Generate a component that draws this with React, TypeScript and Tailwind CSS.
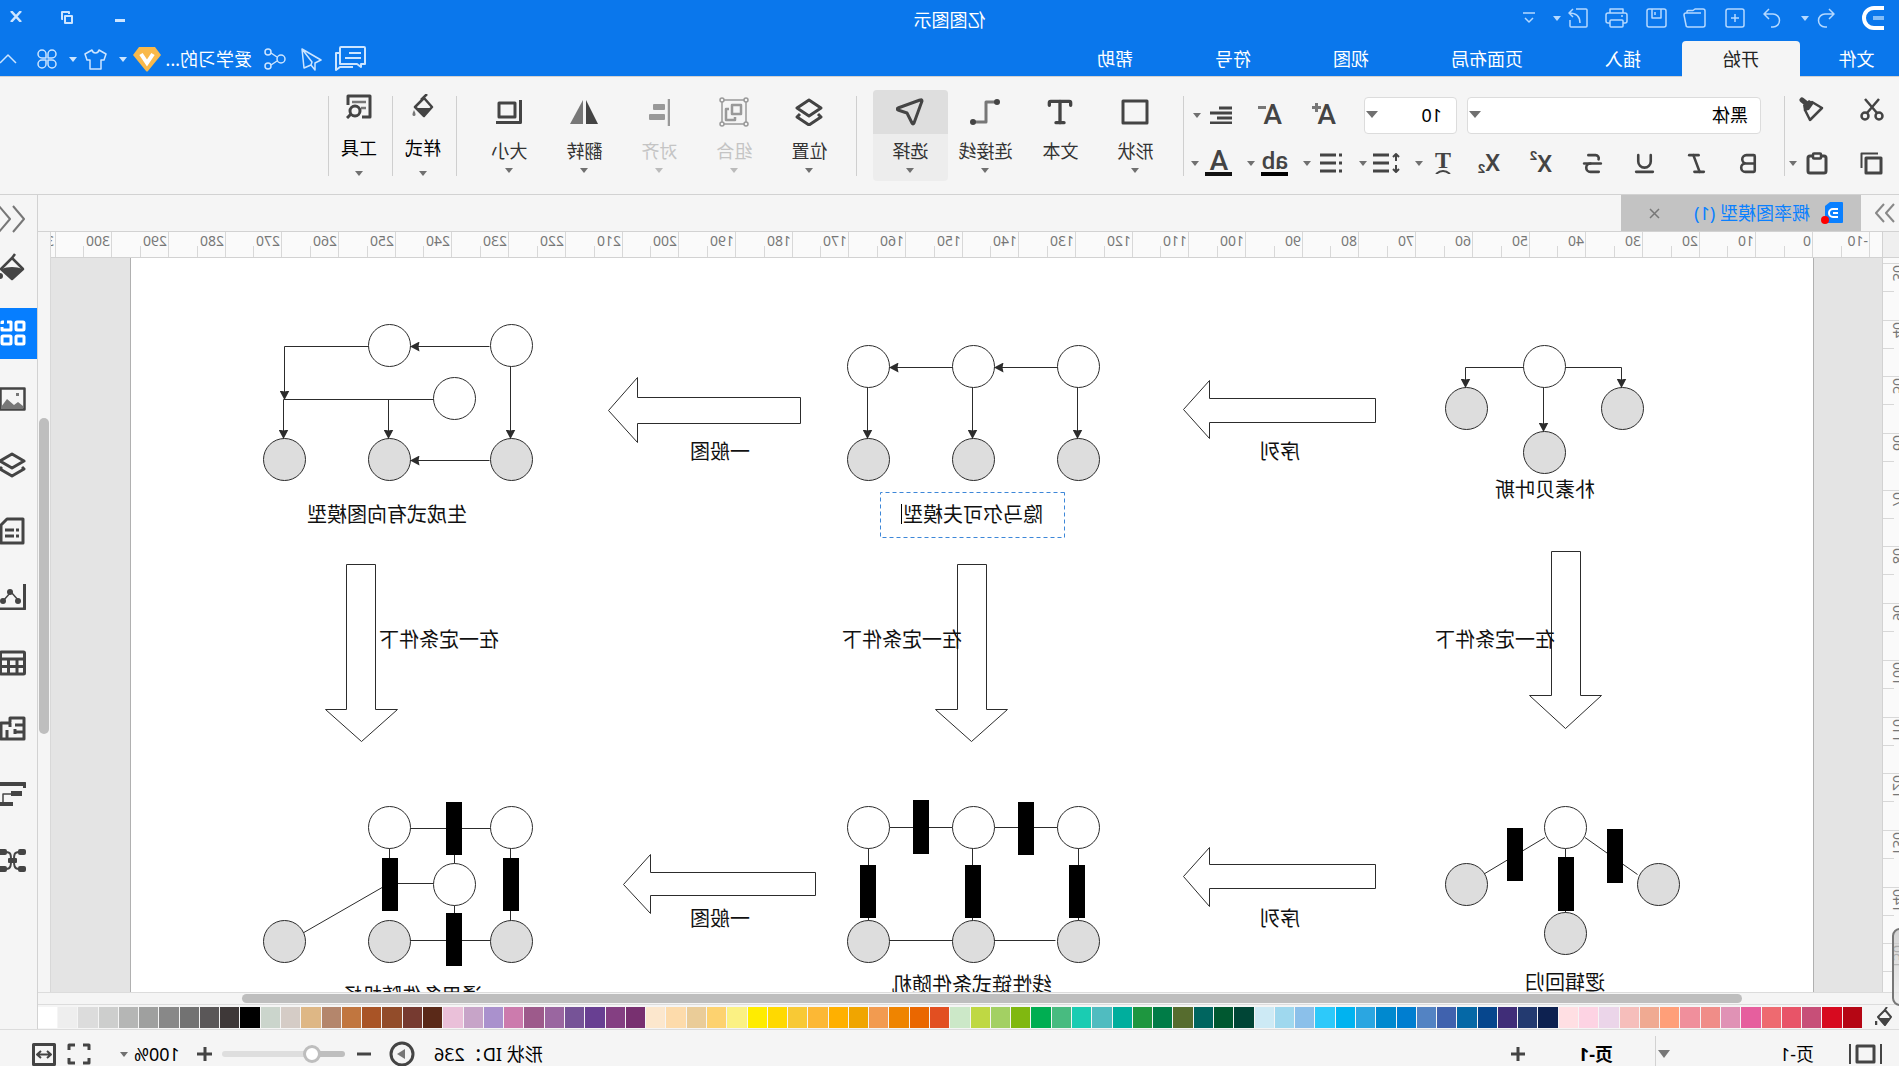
import React from 'react';
import { Bold, Italic, Underline, Strikethrough, Type } from 'lucide-react';

type IconProps = {
  w: number;
  h: number;
  sw?: number;
  className?: string;
  children: React.ReactNode;
};

function Svg({ w, h, sw = 2, className = '', children }: IconProps) {
  return (
    <svg
      width={w}
      height={h}
      viewBox={`0 0 ${w} ${h}`}
      fill="none"
      stroke="currentColor"
      strokeWidth={sw}
      strokeLinejoin="round"
      className={`shrink-0 ${className}`}
      aria-hidden="true"
    >
      {children}
    </svg>
  );
}

function Caret({ className = 'text-[#707070]' }: { className?: string }) {
  return (
    <svg width="8" height="5" viewBox="0 0 8 5" className={`shrink-0 ${className}`} aria-hidden="true">
      <path d="M0 0h8L4 5z" fill="currentColor" />
    </svg>
  );
}

function Divider() {
  return <div className="w-px h-20 mt-[19px] bg-[#cfcfcf] shrink-0" />;
}

const menus = ['插入', '页面布局', '视图', '符号', '帮助'];

const swatches = [
  '#b50614', '#d70a1f', '#c74f78', '#e85468', '#ee6a70', '#e65f9e', '#e092b5', '#f08d88', '#f08f9c', '#ff9f79',
  '#f0aa92', '#f6bebb', '#ebd5e9', '#fdd3e3', '#ffdfe3', '#0d2150', '#233a70', '#402d78', '#06468d', '#0568a6',
  '#4062ae', '#5383c3', '#007ed0', '#0089cf', '#2ba6e1', '#00b3f0', '#2dc9fa', '#8bc0ea', '#9fd8ee', '#cdeaf5',
  '#004536', '#005830', '#00655f', '#566c2e', '#007c47', '#1e963f', '#00ae9d', '#50bcc0', '#1accb2', '#48bb80',
  '#00ae52', '#80b810', '#a3d063', '#bfd843', '#cce8c8', '#e24f21', '#ea6700', '#ef8400', '#f29b50', '#f0a500',
  '#ffb000', '#fcb835', '#f8c935', '#ffd900', '#ffec00', '#fbf183', '#fdd26f', '#eacc98', '#fddbab', '#fce7cd',
  '#783070', '#843f82', '#683f92', '#765397', '#9a66a0', '#9d5a8b', '#cc7bad', '#aa91cd', '#c7a4c8', '#eac0d9',
  '#5a2918', '#763a30', '#924c2a', '#a95426', '#c1763f', '#b4866c', '#deb785', '#d5ccc6', '#cbd5cc', '#000000',
  '#3e3838', '#5a5758', '#727272', '#888888', '#9fa09f', '#b5b6b5', '#cdcecd', '#dcdcdc', '#eeeeee', '#ffffff',
];

/* ---------- header ---------- */

function QuickAccess() {
  return (
    <div className="flex items-center h-9 pl-[15px] text-[#b5d9ff]">
      <svg width="22" height="24" viewBox="0 0 22 24" fill="none" className="shrink-0" aria-hidden="true">
        <path d="M0 2h10a10 10 0 0 1 0 20H0" stroke="#fff" strokeWidth="4" />
        <path d="M0 12h11" stroke="#83bdf8" strokeWidth="4" />
      </svg>
      <button aria-label="撤销" className="ml-[27px]">
        <Svg w={18} h={20} sw={1.5}><path d="M6 1L1 6l5 5M1 6h9a6.5 6.5 0 0 1 0 13H8" /></Svg>
      </button>
      <button aria-label="撤销列表" className="ml-2 w-[9px]"><Caret className="text-[#b5d9ff]" /></button>
      <button aria-label="重做" className="ml-[19px]">
        <Svg w={18} h={20} sw={1.5}><path d="M12 1l5 5-5 5M17 6H8a6.5 6.5 0 0 0 0 13h2" /></Svg>
      </button>
      <button aria-label="新建" className="ml-[18px]">
        <Svg w={20} h={20} sw={1.5}><rect x="1" y="1" width="18" height="18" rx="2" /><path d="M10 6v8M6 10h8" /></Svg>
      </button>
      <button aria-label="打开" className="ml-[19px]">
        <Svg w={23} h={20} sw={1.5}>
          <path d="M5 5h15a2 2 0 0 1 2 2l-2 10a2 2 0 0 1-2 2H3a2 2 0 0 1-2-2V3a2 2 0 0 1 2-2h8l2 1.5h5a1 1 0 0 1 1 1V5" />
        </Svg>
      </button>
      <button aria-label="保存" className="ml-4">
        <Svg w={21} h={20} sw={1.5}><rect x="1" y="1" width="19" height="18" rx="2" /><path d="M6 1v9h9V1M12 4v3" /></Svg>
      </button>
      <button aria-label="打印" className="ml-[18px]">
        <Svg w={23} h={20} sw={1.5}>
          <path d="M5 5V1h13v4M5 15H3a2 2 0 0 1-2-2V7a2 2 0 0 1 2-2h17a2 2 0 0 1 2 2v6a2 2 0 0 1-2 2h-2" />
          <rect x="5" y="12" width="13" height="7" rx="1" /><path d="M5 8h2" />
        </Svg>
      </button>
      <button aria-label="导出" className="ml-[17px]">
        <Svg w={20} h={20} sw={1.5}>
          <path d="M12 1H2a1 1 0 0 0-1 1v16a1 1 0 0 0 1 1h15a1 1 0 0 0 1-1v-6M8 15c0-6 3-10 11-10M15 1l4 4-4 4" />
        </Svg>
      </button>
      <button aria-label="导出选项" className="ml-[7px]"><Caret className="text-[#b5d9ff]" /></button>
      <button aria-label="自定义" className="ml-[18px]">
        <Svg w={12} h={12} sw={1.5}><path d="M0 1h12M2 6l4 4 4-4" /></Svg>
      </button>
    </div>
  );
}

function AccountTools() {
  return (
    <div className="flex items-center h-9 mb-px text-[#cde5ff]">
      <button aria-label="消息">
        <Svg w={31} h={26} sw={2}>
          <path d="M2 1h23a1 1 0 0 1 1 1v16H9l-4 3v-3H1V2a1 1 0 0 1 1-1zM5 7h12M5 12h16M27 7h3v17l-4-3H13" />
        </Svg>
      </button>
      <button aria-label="发送" className="ml-[13px]">
        <Svg w={21} h={23} sw={1.5}><path d="M20 1L1 12l6 3v7l4-5M20 1L10 14l1 3 7 3z" /></Svg>
      </button>
      <button aria-label="分享" className="ml-[15px]">
        <Svg w={22} h={22} sw={1.5}>
          <circle cx="18" cy="4" r="3" /><circle cx="5" cy="11" r="4" /><circle cx="18" cy="18" r="3" />
          <path d="M9 9l6-4M9 13l6 4" />
        </Svg>
      </button>
      <a href="#account" className="ml-3 w-[88px] text-lg text-white whitespace-nowrap">爱学习的...</a>
      <svg width="28" height="25" viewBox="0 0 28 25" className="ml-[3px] shrink-0" aria-hidden="true">
        <path d="M6 0h16l6 8-13 16q-1 1-2 0L0 8z" fill="#f9b94b" />
        <path d="M8 7l6 9 6-9" stroke="#fff" strokeWidth="4" fill="none" />
      </svg>
      <button aria-label="会员" className="ml-[6px]"><Caret className="text-[#cde5ff]" /></button>
      <button aria-label="主题" className="ml-3">
        <Svg w={23} h={21} sw={1.5}><path d="M8 1L1 5l2 6h3v9h11v-9h3l2-6-7-4c-1 4-6 4-7 0z" /></Svg>
      </button>
      <button aria-label="主题列表" className="ml-[7px]"><Caret className="text-[#cde5ff]" /></button>
      <button aria-label="应用" className="ml-3">
        <Svg w={20} h={20} sw={1.5}>
          <path d="M9 9H5a4 4 0 1 1 4-4zM11 9h4a4 4 0 1 0-4-4zM9 11H5a4 4 0 1 0 4 4zM11 11h4a4 4 0 1 1-4 4z" />
        </Svg>
      </button>
      <button aria-label="收起功能区" className="ml-5">
        <Svg w={17} h={10} sw={1.5}><path d="M1 9l8-8 8 8" /></Svg>
      </button>
    </div>
  );
}

function Header() {
  return (
    <header className="relative h-[76px] shrink-0 bg-[#0a77ec] flex flex-col">
      <div className="flex justify-between h-[41px] shrink-0">
        <QuickAccess />
        <div className="flex items-start pt-[11px] pr-[10px] text-[#cde5ff]">
          <button aria-label="最小化" className="mt-2 mr-[42px]"><Svg w={10} h={3} sw={3}><path d="M0 1.5h10" /></Svg></button>
          <button aria-label="还原" className="mr-[39px]">
            <Svg w={12} h={13} sw={2}><path d="M1 5h7v7H1zM4 3V1h7v7h-1" /></Svg>
          </button>
          <button aria-label="关闭"><Svg w={12} h={11} sw={2.5}><path d="M1 0l10 11M11 0L1 11" /></Svg></button>
        </div>
      </div>
      <h1 className="absolute inset-x-0 top-0 h-10 leading-10 text-lg text-white text-center pointer-events-none">亿图图示</h1>
      <div className="flex justify-between flex-1">
        <nav className="flex text-lg leading-[37px] text-white">
          <button className="w-[99px] pr-[14px] text-center">文件</button>
          <button className="px-[41px] bg-[#f5f5f5] text-[#222] rounded-t-sm">开始</button>
          {menus.map((m) => (
            <button key={m} className="px-[41px]">{m}</button>
          ))}
        </nav>
        <AccountTools />
      </div>
    </header>
  );
}

/* ---------- ribbon ---------- */

const icons = {
  shape: <Svg w={28} h={26} sw={3}><rect x="2" y="2" width="24" height="22" /></Svg>,
  text: <Type size={32} strokeWidth={2.5} />,
  connector: (
    <Svg w={30} h={26} sw={3}>
      <path d="M5 3h9v20h11" className="text-[#777]" stroke="currentColor" />
      <circle cx="3" cy="3" r="3" fill="currentColor" stroke="none" />
      <circle cx="27" cy="23" r="3" fill="currentColor" stroke="none" />
    </Svg>
  ),
  select: <Svg w={28} h={28} sw={3}><path d="M2 3q0-2 2-1l22 8q2 1 0 2l-9 3-5 10q-1 2-2 0z" /></Svg>,
  layers: <Svg w={28} h={28} sw={3}><path d="M14 2l12 8-12 8L2 10zM5 16l-3 3 12 8 12-8-3-3" /></Svg>,
  group: (
    <Svg w={30} h={30} sw={2}>
      <rect x="3" y="3" width="24" height="24" strokeWidth="1.5" />
      <path d="M8 8h9v9H8zM20 12h3v11h-9v-3" strokeWidth="2.5" />
      <g fill="#f5f5f5" strokeWidth="1.5">
        <circle cx="3" cy="3" r="2" /><circle cx="27" cy="3" r="2" /><circle cx="3" cy="27" r="2" /><circle cx="27" cy="27" r="2" />
      </g>
    </Svg>
  ),
  align: (
    <Svg w={22} h={27} sw={2}>
      <path d="M1 0v27" strokeWidth="2.5" />
      <rect x="5" y="5" width="12" height="6" rx="1" fill="currentColor" stroke="none" />
      <rect x="5" y="15" width="16" height="6" rx="1" fill="currentColor" stroke="none" />
    </Svg>
  ),
  flip: (
    <Svg w={28} h={24} sw={0}>
      <path d="M12 0v24H0z" fill="currentColor" /><path d="M15 0v24h13z" fill="#777" />
    </Svg>
  ),
  size: <Svg w={26} h={24} sw={3}><path d="M1.5 0v22.5H26" /><rect x="7" y="3" width="16" height="14" /></Svg>,
  bucket: (
    <Svg w={22} h={24} sw={2.5}>
      <path d="M7 0l6 6M10 4l9 9-9 9-8-9z" /><path d="M3 14h15l-8 8z" fill="currentColor" stroke="none" />
      <path d="M20 16q3 6 0 6t0-6z" fill="#777" stroke="none" />
    </Svg>
  ),
  tools: (
    <Svg w={26} h={25} sw={3}>
      <path d="M10 23H2V2h22v9" /><path d="M6 8h14M6 14h5" stroke="#777" strokeWidth="2.5" />
      <circle cx="17" cy="17" r="5" /><path d="M21 20l4 4" />
    </Svg>
  ),
};

type BigProps = {
  label: string;
  icon: React.ReactNode;
  caret?: boolean;
  active?: boolean;
  disabled?: boolean;
  compact?: boolean;
};

function BigButton({ label, icon, caret = true, active, disabled, compact }: BigProps) {
  return (
    <button
      disabled={disabled}
      className={`shrink-0 rounded-sm overflow-hidden flex flex-col items-center ${active ? 'bg-[#ededed]' : ''} ${
        disabled ? 'text-[#c4c4c4]' : compact ? 'text-black' : 'text-[#333]'
      } ${compact ? 'w-[62px] h-[94px]' : 'w-[75px] h-[91px]'}`}
    >
      <span
        className={`w-full flex items-center justify-center ${compact ? 'h-[38px]' : 'h-11'} ${active ? 'bg-[#dedede]' : ''} ${
          disabled ? 'text-[#999]' : 'text-[#444]'
        }`}
      >
        {icon}
      </span>
      <span className={`text-lg ${compact ? 'leading-[46px]' : 'leading-[34px]'}`}>{label}</span>
      {caret && <Caret className={disabled ? 'text-[#bbb]' : 'text-[#707070]'} />}
    </button>
  );
}

function SplitTool({ label, children }: { label: string; children: React.ReactNode }) {
  return (
    <div className="w-14 flex items-center shrink-0">
      <button aria-label={label} className="w-8 flex justify-center">{children}</button>
      <button aria-label={`${label}选项`} className="w-4 flex justify-center"><Caret /></button>
    </div>
  );
}

type SelectProps = { label: string; value: string; className: string };

function FontSelect({ label, value, className }: SelectProps) {
  return (
    <div className="relative">
      <select
        aria-label={label}
        className={`appearance-none h-[37px] bg-white border border-[#dcdcdc] rounded-sm text-lg text-black ${className}`}
      >
        <option>{value}</option>
      </select>
      <svg width="12" height="7" viewBox="0 0 12 7" className="absolute right-[2px] top-[14px] pointer-events-none" aria-hidden="true">
        <path d="M0 0h12L6 7z" fill="#707070" />
      </svg>
    </div>
  );
}

const styleTools = [
  { label: '加粗', icon: Bold },
  { label: '斜体', icon: Italic },
  { label: '下划线', icon: Underline },
  { label: '删除线', icon: Strikethrough },
];

function Ribbon() {
  return (
    <div className="h-[119px] shrink-0 flex bg-[#f5f5f5] border-y border-[#d2d2d2] text-[#444]">
      <div className="w-[114px] pt-[5px] shrink-0">
        <div className="flex items-center h-[54px]">
          <button aria-label="剪切" className="w-[54px] flex justify-center">
            <Svg w={24} h={23} sw={2.5}>
              <circle cx="5" cy="18" r="3.5" /><circle cx="19" cy="18" r="3.5" /><path d="M7 15L19 1M17 15L5 1" />
            </Svg>
          </button>
          <button aria-label="格式刷" className="ml-[21px]">
            <Svg w={25} h={25} sw={2.5}>
              <path d="M2 11l10-6 7 8-5 10z" />
              <path d="M10 6l5-3 6 5-1 6-5-1z" fill="currentColor" stroke="none" />
              <path d="M17 7l5-4" strokeWidth="5" strokeLinecap="round" />
            </Svg>
          </button>
        </div>
        <div className="flex items-center h-[54px]">
          <button aria-label="复制" className="w-[54px] flex justify-center">
            <Svg w={23} h={23} sw={3}><rect x="2" y="6" width="15" height="15" /><path d="M5 1.5h16.5V16" strokeWidth="2" /></Svg>
          </button>
          <button aria-label="粘贴" className="ml-[17px]">
            <Svg w={22} h={23} sw={3}>
              <rect x="2" y="4" width="18" height="17" rx="2" />
              <rect x="7" y="1.5" width="8" height="5" rx="1" fill="#f5f5f5" strokeWidth="2.5" />
            </Svg>
          </button>
          <button aria-label="粘贴选项" className="ml-[9px]"><Caret /></button>
        </div>
      </div>
      <Divider />

      <div className="w-[600px] shrink-0 pt-[14px]">
        <div className="flex items-center h-12 pl-[23px]">
          <FontSelect label="字体" value="黑体" className="w-[294px] pl-3" />
          <div className="w-[10px] shrink-0" />
          <FontSelect label="字号" value="10" className="w-[93px] pl-[14px]" />
          <button aria-label="增大字号" className="relative ml-7 w-6 text-left text-[28px] leading-8 font-[Roboto] font-medium">
            A
            <svg width="9" height="9" viewBox="0 0 9 9" className="absolute right-0 top-1" aria-hidden="true">
              <path d="M4.500 0v9M0 4.500h9" stroke="#777" strokeWidth="3" />
            </svg>
          </button>
          <button aria-label="减小字号" className="relative ml-[30px] w-6 text-left text-[28px] leading-8 font-[Roboto] font-medium">
            A
            <svg width="8" height="9" viewBox="0 0 8 9" className="absolute right-0 top-1" aria-hidden="true">
              <path d="M0 4.500h8" stroke="#777" strokeWidth="3" />
            </svg>
          </button>
          <button aria-label="对齐方式" className="ml-[26px] w-[22px]">
            <Svg w={22} h={18} sw={3}><path d="M0 2h13M0 7h22M0 12h15M0 17h22" /></Svg>
          </button>
          <button aria-label="对齐选项" className="ml-[9px]"><Caret /></button>
        </div>
        <div className="flex items-center h-12 pl-[9px]">
          {styleTools.map(({ label, icon: Icon }) => (
            <button key={label} aria-label={label} className="w-[52px] shrink-0 flex justify-center">
              <Icon size={25} strokeWidth={2.5} />
            </button>
          ))}
          <button aria-label="上标" className="w-[52px] shrink-0 flex justify-center font-[Roboto] font-medium">
            <span className="text-2xl leading-6 pt-[2px]">X</span>
            <span className="text-[13px] leading-3 font-bold">2</span>
          </button>
          <button aria-label="下标" className="w-[52px] shrink-0 flex justify-center items-end font-[Roboto] font-medium">
            <span className="text-2xl leading-6">X</span>
            <span className="text-[13px] leading-3 font-bold">2</span>
          </button>
          <div className="w-1 shrink-0" />
          <SplitTool label="文字效果">
            <span className="relative h-[22px] w-4 text-center font-['Liberation_Serif'] font-bold text-[24px] leading-[16px]">
              T
              <svg width="16" height="5" viewBox="0 0 16 5" className="absolute left-0 bottom-0" aria-hidden="true">
                <path d="M1 5q7-6 14 0" stroke="#444" strokeWidth="2" fill="none" />
              </svg>
            </span>
          </SplitTool>
          <SplitTool label="行距">
            <Svg w={27} h={22} sw={3}><path d="M11 3h16M11 11h16M11 19h16" /><path d="M4 9V2M1 5l3-3 3 3M4 13v7M1 17l3 3 3-3" strokeWidth="2" /></Svg>
          </SplitTool>
          <SplitTool label="项目符号">
            <Svg w={22} h={20} sw={3}><path d="M0 2h3M0 10h3M0 18h3" /><path d="M6 2h16M6 10h16M6 18h16" /></Svg>
          </SplitTool>
          <SplitTool label="突出显示">
            <span className="w-[27px] border-b-4 border-black font-[Roboto] font-medium text-2xl leading-[22px]">ab</span>
          </SplitTool>
          <SplitTool label="字体颜色">
            <span className="w-[27px] border-b-4 border-[#111] font-[Roboto] font-medium text-[28px] leading-[22px]">A</span>
          </SplitTool>
        </div>
      </div>
      <Divider />

      <div className="flex pt-[13px] pl-[10px] pr-4">
        <BigButton label="形状" icon={icons.shape} />
        <BigButton label="文本" icon={icons.text} caret={false} />
        <BigButton label="连接线" icon={icons.connector} />
        <BigButton label="选择" icon={icons.select} active />
      </div>
      <Divider />
      <div className="flex pt-[13px] pl-[9px] pr-[15px]">
        <BigButton label="位置" icon={icons.layers} />
        <BigButton label="组合" icon={icons.group} disabled />
        <BigButton label="对齐" icon={icons.align} disabled />
        <BigButton label="翻转" icon={icons.flip} />
        <BigButton label="大小" icon={icons.size} />
      </div>
      <Divider />
      <div className="flex w-[63px] shrink-0 pt-[10px] pl-[2px]"><BigButton label="样式" icon={icons.bucket} compact /></div>
      <Divider />
      <div className="flex w-[63px] shrink-0 pt-[10px] pl-[2px]"><BigButton label="工具" icon={icons.tools} compact /></div>
      <Divider />
    </div>
  );
}

/* ---------- rulers ---------- */

const UNIT = 5.669;

function TopRuler() {
  const marks = Array.from({ length: 33 }, (_, i) => (i - 1) * 10);
  return (
    <svg className="block w-full h-[25px] bg-[#fafafa]" aria-hidden="true">
      {marks.map((v) => {
        const x = Math.round(69 + v * UNIT);
        return (
          <g key={v}>
            <path d={`M${x + 0.5} 0V25M${Math.round(x + 5 * UNIT) + 0.5} 14V25`} stroke="#d8d8d8" />
            <text x={x + 2} y="14" fontSize="14" fill="#777">{v}</text>
          </g>
        );
      })}
    </svg>
  );
}

function SideRuler() {
  const marks = Array.from({ length: 14 }, (_, i) => 20 + i * 10);
  return (
    <svg className="block w-4 h-full shrink-0 bg-[#fafafa]" aria-hidden="true">
      {marks.map((v) => {
        const y = Math.round(5 + (v - 30) * UNIT);
        return (
          <g key={v}>
            <path d={`M0 ${y + 0.5}H16M5 ${Math.round(y + 5 * UNIT) + 0.5}H16`} stroke="#d8d8d8" />
            <text x="6" y={y + 2} fontSize="14" fill="#777" textAnchor="end" transform={`rotate(-90 6 ${y + 2})`}>{v}</text>
          </g>
        );
      })}
    </svg>
  );
}

/* ---------- diagram ---------- */

// [cx, cy, observed]
const nodes: [number, number, boolean][] = [
  [268.5, 108.5, false], [346.5, 150.5, true], [190.5, 150.5, true], [268.5, 194.5, true],
  [734.5, 108.5, false], [839.5, 108.5, false], [944.5, 108.5, false],
  [734.5, 201.5, true], [839.5, 201.5, true], [944.5, 201.5, true],
  [1301.5, 87.5, false], [1423.5, 87.5, false], [1358.5, 140.5, false],
  [1301.5, 201.5, true], [1423.5, 201.5, true], [1528.5, 201.5, true],
  [247.5, 569.5, false], [154.5, 626.5, true], [346.5, 626.5, true], [247.5, 675.5, true],
  [734.5, 569.5, false], [839.5, 569.5, false], [944.5, 569.5, false],
  [734.5, 683.5, true], [839.5, 683.5, true], [944.5, 683.5, true],
  [1301.5, 569.5, false], [1423.5, 569.5, false], [1358.5, 626.5, false],
  [1301.5, 683.5, true], [1423.5, 683.5, true], [1528.5, 683.5, true],
];

// [x, y, height]
const factors: [number, number, number][] = [
  [190, 571, 54], [290, 570, 53], [239, 599, 54],
  [884, 542, 54], [779, 544, 53], [937, 607, 53], [832, 607, 53], [728, 607, 53],
  [1351, 544, 53], [1415, 600, 53], [1294, 600, 53], [1351, 655, 53],
];

const directed = [
  'M247.5 109.5H191.5V129.5', 'M289.5 109.5H347.5V129.5', 'M269.5 129.5V173.5',
  'M755.5 109.5H818.5', 'M860.5 109.5H923.5',
  'M735.5 129.5V180.5', 'M840.5 129.5V180.5', 'M945.5 129.5V180.5',
  'M1323.5 88.5H1402.5', 'M1444.5 88.5H1528.5V141.5', 'M1302.5 108.5V180.5',
  'M1379.5 141.5H1529.5V180.5', 'M1424.5 141.5V180.5', 'M1323.5 202.5H1402.5',
];

const plain = [
  'M228 579.5L175.5 616.5', 'M268 579.5L329 616', 'M247.5 590.5V655',
  'M755.5 569.5H818.5M860.5 569.5H923.5', 'M757.5 682.5H819M860 682.5H924.5',
  'M734.5 590V663M840.5 590V663M944.5 590V663',
  'M1323 570.5H1403', 'M1302.5 590V663', 'M1423.5 590V601', 'M1358.5 596V606M1358.5 647V656',
  'M1380 625.5H1416', 'M1430 629L1510 675', 'M1323 682.5H1403',
];

const blockArrows = [
  'M437.5 140.5H603.5V122.5L629.5 151.5L603.5 180.5V164.5H437.5z',
  'M1012.5 139.5H1175.5V119.5L1204.5 152.5L1175.5 184.5V165.5H1012.5z',
  'M437.5 606.5H603.5V589.5L629.5 618.5L603.5 648.5V630.5H437.5z',
  'M997.5 614.5H1162.5V596.5L1189.5 626.5L1162.5 655.5V637.5H997.5z',
  'M232.5 293.5H261.5V437.5H283.5L247.5 470.5L211.5 437.5H232.5z',
  'M826.5 306.5H855.5V451.5H877.5L841.5 483.5L805.5 451.5H826.5z',
  'M1437.5 306.5H1466.5V451.5H1487.5L1451.5 483.5L1415.5 451.5H1437.5z',
];

const captions = [
  { x: 218, y: 232, text: '朴素贝叶斯' },
  { x: 513, y: 194, text: '序列' },
  { x: 1063, y: 194, text: '一般图' },
  { x: 1346, y: 257, text: '生成式有向图模型' },
  { x: 258, y: 382, text: '在一定条件下' },
  { x: 851, y: 382, text: '在一定条件下' },
  { x: 1314, y: 382, text: '在一定条件下' },
  { x: 513, y: 661, text: '序列' },
  { x: 1063, y: 661, text: '一般图' },
  { x: 208, y: 725, text: '逻辑回归' },
  { x: 761, y: 727, text: '线性链式条件随机' },
  { x: 1331, y: 738, text: '通用条件随机场' },
];

function Canvas() {
  return (
    <div className="flex-1 min-w-0 overflow-hidden bg-[#e4e4e4] border-l border-[#d2d2d2]">
      <div className="relative ml-[68px] w-[1684px] h-full bg-white border-x border-[#b0b0b0] overflow-hidden">
        <svg width="1682" height="740" className="absolute left-0 top-0" fill="none" stroke="#2c2c2c" aria-hidden="true">
          <defs>
            <marker id="head" markerWidth="10" markerHeight="10" refX="9" refY="5" orient="auto" markerUnits="userSpaceOnUse">
              <path d="M0 0L9.5 5L0 10L1 5z" fill="#2c2c2c" stroke="none" />
            </marker>
          </defs>
          {blockArrows.map((d) => <path key={d} d={d} />)}
          {plain.map((d) => <path key={d} d={d} />)}
          {nodes.map(([cx, cy, observed]) => (
            <circle key={`${cx}-${cy}`} cx={cx} cy={cy} r="21" fill={observed ? '#ddd' : '#fff'} />
          ))}
          {directed.map((d) => <path key={d} d={d} markerEnd="url(#head)" />)}
          {factors.map(([x, y, h]) => (
            <rect key={`${x}-${y}`} x={x} y={y} width="16" height={h} fill="#000" stroke="none" />
          ))}
          <rect x="748.5" y="234.5" width="184" height="45" stroke="#3d87d8" strokeDasharray="4 3" />
        </svg>
        {captions.map((c) => (
          <div
            key={`${c.x}-${c.y}`}
            className="absolute -translate-y-1/2 text-xl leading-6 text-[#111] whitespace-nowrap"
            style={{ left: c.x, top: c.y }}
          >
            {c.text}
          </div>
        ))}
        <input
          aria-label="形状文本"
          defaultValue="隐马尔可夫模型"
          className="absolute left-[750px] top-[235px] w-[180px] h-10 bg-transparent text-xl text-center text-[#111] outline-none"
        />
        <div className="absolute left-[911px] top-[246px] w-px h-5 bg-black" />
      </div>
    </div>
  );
}

/* ---------- side panel ---------- */

const panelIcons: { label: string; active?: boolean; icon: React.ReactNode }[] = [
  {
    label: '填充',
    icon: (
      <Svg w={28} h={28} sw={2.5}>
        <path d="M11 1l3 4L25 16 14 26 3 16 14 5" /><path d="M3 16q11-4 22 0L14 27z" fill="currentColor" stroke="none" />
        <circle cx="26" cy="23" r="3" fill="currentColor" stroke="none" />
      </Svg>
    ),
  },
  {
    label: '符号库',
    active: true,
    icon: (
      <Svg w={28} h={26} sw={3}>
        <rect x="2" y="2" width="8" height="8" rx="1" /><path d="M19 2h-4v8h9V7M22 2h2v2" />
        <rect x="2" y="16" width="8" height="8" rx="1" /><rect x="15" y="16" width="9" height="8" rx="1" />
      </Svg>
    ),
  },
  {
    label: '图片',
    icon: (
      <Svg w={28} h={24} sw={2.5}>
        <rect x="1.5" y="1.5" width="24" height="21" /><path d="M3 19l5-4 4 3 7-6 6 8v2H3z" fill="#777" stroke="none" />
        <rect x="7" y="6" width="3" height="3" fill="#777" stroke="none" />
      </Svg>
    ),
  },
  { label: '图层', icon: <Svg w={28} h={26} sw={3}><path d="M14 2l12 7-12 7L2 9zM4 15l-2 2 12 7 12-7-2-2" /></Svg> },
  {
    label: '文档',
    icon: <Svg w={28} h={28} sw={3}><path d="M3 2h16l6 6v18H3z" /><path d="M7 13h3M12 13h9M7 19h3M12 19h9" /></Svg>,
  },
  {
    label: '图表',
    icon: (
      <Svg w={28} h={26} sw={2.5}>
        <path d="M1.5 0v25H28" strokeWidth="3" /><path d="M7 17l8-9 8 9" strokeWidth="1.5" />
        <g fill="currentColor" stroke="none"><circle cx="8" cy="17" r="3" /><circle cx="16" cy="8" r="3" /><circle cx="23" cy="17" r="3" /></g>
      </Svg>
    ),
  },
  {
    label: '表格',
    icon: <Svg w={28} h={26} sw={3}><rect x="1.5" y="2" width="24" height="22" rx="1" /><path d="M1 9h25M1 16.5h25M9 9v15M17.500 9v15" /></Svg>,
  },
  {
    label: '平面图',
    icon: <Svg w={28} h={25} sw={3}><path d="M16 6V2H2v21h23V7h-9v4M2 9h9M2 16h9v-3M11 16v2M19 14v9" /></Svg>,
  },
  {
    label: '格式',
    icon: (
      <Svg w={28} h={25} sw={3}>
        <path d="M1 6V2h27" strokeWidth="4" /><rect x="4" y="9" width="11" height="5" fill="currentColor" stroke="none" />
        <path d="M14 12h9v9" strokeWidth="1.5" /><rect x="13" y="20" width="14" height="4" fill="currentColor" stroke="none" />
      </Svg>
    ),
  },
  {
    label: '思维导图',
    icon: (
      <Svg w={28} h={24} sw={2}>
        <g fill="currentColor" stroke="none">
          <rect x="0" y="0" width="8" height="6" rx="2" /><rect x="0" y="17" width="8" height="6" rx="2" />
          <rect x="19" y="0" width="9" height="6" rx="2" /><rect x="19" y="17" width="9" height="6" rx="2" /><rect x="9" y="9" width="9" height="5" rx="1" />
        </g>
        <path d="M7 3c5 0 5 3 5 8s0 9-5 9M20 3c-5 0-5 3-5 8s0 9 5 9" />
      </Svg>
    ),
  },
];

function SidePanel() {
  return (
    <aside className="w-[38px] shrink-0 overflow-hidden bg-[#f5f5f5] border-l border-[#d2d2d2] text-[#444]">
      <button aria-label="展开面板" className="flex items-center h-[47px] pl-3 text-[#777]">
        <Svg w={26} h={28} sw={2}><path d="M12 1L1 14l11 13M26 1L15 14l11 13" /></Svg>
      </button>
      <div className="flex flex-col gap-[15px]">
        {panelIcons.map((p) => (
          <button
            key={p.label}
            aria-label={p.label}
            className={`h-[51px] w-full pl-[11px] pb-[2px] flex items-center ${p.active ? 'bg-[#067eff] text-white' : ''}`}
          >
            {p.icon}
          </button>
        ))}
      </div>
    </aside>
  );
}

/* ---------- workspace ---------- */

function DocTabs() {
  return (
    <div className="flex h-[37px] shrink-0 bg-[#f5f5f5] border-b border-[#d2d2d2]">
      <button aria-label="展开符号库" className="w-[38px] pl-1 text-[#888]">
        <Svg w={20} h={20} sw={2}><path d="M1 1l8 9-8 9M11 1l8 9-8 9" /></Svg>
      </button>
      <div className="flex items-center w-60 pl-[18px] bg-[#c3c3c3]">
        <svg width="23" height="22" viewBox="0 0 23 22" fill="none" aria-hidden="true">
          <path d="M1 0h12l5 4v16a1 1 0 0 1-1 1H1a1 1 0 0 1-1-1V1a1 1 0 0 1 1-1z" fill="#0a80ff" />
          <path d="M5 7h5a4 4 0 0 1 0 8H5M5 11h5" stroke="#fff" strokeWidth="2" />
          <circle cx="18" cy="18" r="4" fill="#f00" />
        </svg>
        <a href="#doc" className="ml-[10px] text-lg leading-9 text-[#0a80ff] whitespace-nowrap">概率图模型 (1)</a>
        <button aria-label="关闭标签" className="ml-auto mr-7 text-[#777]">
          <Svg w={11} h={11} sw={1.5}><path d="M1 1l9 9M10 1l-9 9" /></Svg>
        </button>
      </div>
    </div>
  );
}

function Workspace() {
  return (
    <main className="flex flex-1 min-h-0">
      <div className="flex flex-col flex-1 min-w-0">
        <DocTabs />
        <div className="relative flex flex-1 min-h-0">
          <div className="flex flex-col flex-1 min-w-0">
            <div className="flex h-[26px] shrink-0 border-b border-[#d2d2d2]">
              <div className="w-4 bg-[#efefef] shrink-0" />
              <div className="flex-1 min-w-0 border-l border-[#d2d2d2]"><TopRuler /></div>
            </div>
            <div className="flex flex-1 min-h-0">
              <SideRuler />
              <Canvas />
            </div>
          </div>
          <div className="w-[13px] shrink-0 border-l border-[#d8d8d8] bg-[#f5f5f5] px-px pt-[186px]">
            <div className="h-[316px] rounded-full bg-[#bebebe]" />
          </div>
          <div className="absolute -left-6 -bottom-[14px] w-[31px] h-[78px] rounded-lg border-2 border-[#777] bg-gradient-to-b from-[#bbb]/60 to-[#eee]/80" />
        </div>
        <div className="h-[13px] shrink-0 border-y border-[#dcdcdc] bg-[#f5f5f5] pl-[157px] pr-[204px] pt-px">
          <div className="h-[9px] rounded-full bg-[#bebebe]" />
        </div>
        <div className="flex items-center h-6 shrink-0 bg-[#f5f5f5]">
          <button aria-label="填充颜色" className="w-[37px] pr-2 flex justify-center text-[#444]">
            <Svg w={18} h={20} sw={2}>
              <path d="M6 0l3 4M8 3l7 7-7 8-6-8z" /><path d="M2 11h13l-7 8z" fill="currentColor" stroke="none" />
              <path d="M17 14v4" strokeWidth="2.5" />
            </Svg>
          </button>
          <div className="flex flex-1 gap-px h-[21px]">
            {swatches.map((c) => (
              <button key={c} aria-label={c} className="flex-1" style={{ backgroundColor: c }} />
            ))}
          </div>
        </div>
      </div>
      <SidePanel />
    </main>
  );
}

/* ---------- status bar ---------- */

function StatusBar() {
  return (
    <footer className="h-[37px] shrink-0 flex justify-between bg-[#f5f5f5] border-t border-[#dcdcdc] text-lg leading-6 text-[#222]">
      <div className="flex items-center h-12 pl-[17px]">
        <button aria-label="页面视图" className="text-[#444]">
          <Svg w={33} h={20} sw={2}><path d="M1 0v20M32 0v20" /><rect x="8" y="2" width="17" height="16" strokeWidth="3" /></Svg>
        </button>
        <div className="relative flex items-center ml-[35px]">
          <select aria-label="页面" className="appearance-none w-[158px] text-black bg-transparent"><option>页-1</option></select>
          <svg width="12" height="8" viewBox="0 0 12 8" className="absolute right-[2px] pointer-events-none" aria-hidden="true">
            <path d="M0 0h12L6 8z" fill="#777" />
          </svg>
        </div>
        <div className="w-px h-9 bg-[#d2d2d2]" />
        <button className="ml-[42px] font-bold text-black">页-1</button>
        <button aria-label="添加页面" className="ml-[54px] text-[#444]"><Svg w={14} h={14} sw={3}><path d="M7 0v14M0 7h14" /></Svg></button>
      </div>
      <div className="flex items-center h-12 pr-8 text-[#444]">
        <span className="text-black whitespace-nowrap">形状 ID：236</span>
        <button aria-label="演示" className="ml-[19px]">
          <Svg w={26} h={26} sw={3}><circle cx="13" cy="13" r="11" /><path d="M10 8l8 5-8 5z" fill="#777" stroke="none" /></Svg>
        </button>
        <button aria-label="缩小" className="ml-[18px]"><Svg w={14} h={4} sw={3}><path d="M0 2h14" /></Svg></button>
        <input
          type="range"
          aria-label="缩放"
          defaultValue={23}
          className="appearance-none ml-3 w-[123px] h-[6px] rounded-full bg-[linear-gradient(to_right,#bebebe_27%,#dedede_27%)] [&::-webkit-slider-thumb]:appearance-none [&::-webkit-slider-thumb]:size-[18px] [&::-webkit-slider-thumb]:rounded-full [&::-webkit-slider-thumb]:bg-white [&::-webkit-slider-thumb]:border-3 [&::-webkit-slider-thumb]:border-[#bebebe]"
        />
        <button aria-label="放大" className="ml-[10px]"><Svg w={15} h={14} sw={3}><path d="M7 0v14M0 7h15" /></Svg></button>
        <button className="ml-[17px] flex items-center gap-[6px] text-black">100%<Caret /></button>
        <button aria-label="全屏" className="ml-[29px]">
          <Svg w={24} h={22} sw={3}><path d="M8 2H2v5M16 2h6v5M8 20H2v-5M16 20h6v-5" /></Svg>
        </button>
        <button aria-label="适应页面" className="ml-[11px]">
          <Svg w={24} h={23} sw={3}><rect x="1.5" y="1.5" width="21" height="20" /><path d="M5 11.5h14M9 8l-4 3.500L9 15M15 8l4 3.500-4 3.500" strokeWidth="2" /></Svg>
        </button>
      </div>
    </footer>
  );
}

export default function App() {
  return (
    <div className="h-screen flex flex-col overflow-hidden -scale-x-100 bg-[#f5f5f5] font-['Noto_Sans','Noto_Sans_CJK_SC',sans-serif]">
      <Header />
      <Ribbon />
      <Workspace />
      <StatusBar />
    </div>
  );
}
